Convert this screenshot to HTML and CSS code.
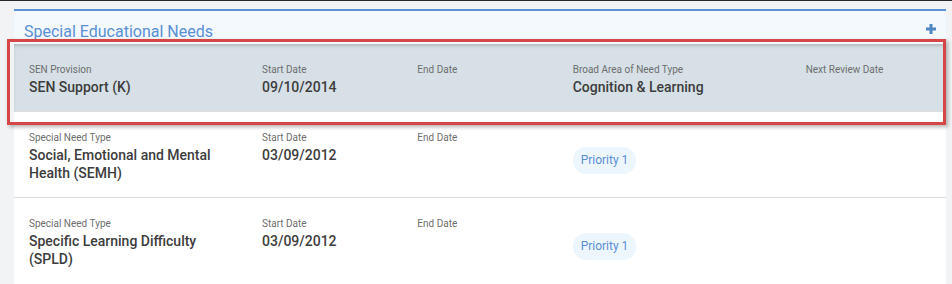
FILE: index.html
```html
<!DOCTYPE html>
<html>
<head>
<title>Special Educational Needs</title>
<link rel="stylesheet" href="styles.css">
</head>
<body>
<div class="page">
  <div class="card">
    <div class="card-header">
      <h2 class="card-title">Special Educational Needs</h2>
      <span class="add-icon">
        <svg width="10" height="10" viewBox="0 0 10 10">
          <path d="M5 0 V10 M0 5 H10" stroke="currentColor" stroke-width="3"/>
        </svg>
      </span>
    </div>

    <div class="sen-row highlight">
      <div class="cell">
        <div class="label">SEN Provision</div>
        <div class="value">SEN Support (K)</div>
      </div>
      <div class="cell">
        <div class="label">Start Date</div>
        <div class="value">09/10/2014</div>
      </div>
      <div class="cell">
        <div class="label">End Date</div>
      </div>
      <div class="cell">
        <div class="label">Broad Area of Need Type</div>
        <div class="value">Cognition &amp; Learning</div>
      </div>
      <div class="cell">
        <div class="label">Next Review Date</div>
      </div>
    </div>

    <div class="sen-row">
      <div class="cell">
        <div class="label">Special Need Type</div>
        <div class="value">Social, Emotional and Mental Health (SEMH)</div>
      </div>
      <div class="cell">
        <div class="label">Start Date</div>
        <div class="value">03/09/2012</div>
      </div>
      <div class="cell">
        <div class="label">End Date</div>
      </div>
      <div class="cell">
        <span class="priority">Priority 1</span>
      </div>
      <div class="cell"></div>
    </div>

    <div class="sen-row last">
      <div class="cell">
        <div class="label">Special Need Type</div>
        <div class="value">Specific Learning Difficulty (SPLD)</div>
      </div>
      <div class="cell">
        <div class="label">Start Date</div>
        <div class="value">03/09/2012</div>
      </div>
      <div class="cell">
        <div class="label">End Date</div>
      </div>
      <div class="cell">
        <span class="priority">Priority 1</span>
      </div>
      <div class="cell"></div>
    </div>

    <div class="annotation"></div>
  </div>
</div>
</body>
</html>
```

FILE: styles.css
```css
body {
  font-family: Roboto, "Liberation Sans", Arial, sans-serif;
  margin: 0;
  padding: 0;
  background-color: #f2f3f5;
  border-top: 1px solid #262626;
  height: 283px;
  overflow: hidden;
}

.page {
  padding: 8px 6px 0 14px;
}

.card {
  position: relative;
  background-color: white;
  border-top: 2px solid #5b92d3;
}

.card-header {
  display: flex;
  justify-content: space-between;
  align-items: flex-start;
  height: 22px;
  padding: 11px 10px 0 10px;
  background-color: #f3f9fd;
}

.card-title {
  margin: 0;
  font-size: 16px;
  font-weight: 400;
  line-height: 20px;
  color: #5a8fd4;
}

.add-icon {
  display: flex;
  margin-top: 2px;
  color: #4f86c6;
}

.sen-row {
  display: grid;
  grid-template-columns: 3fr 2fr 2fr 3fr 2fr;
  padding: 19px 0 15px 0;
  border-bottom: 1px solid #dcdcdc;
}

.sen-row.last {
  border-bottom: none;
  padding-bottom: 30px;
}

.sen-row.highlight {
  background-color: #d6e0e6;
  box-shadow: inset 0 3px 4px -2px rgba(0, 0, 0, 0.25);
}

.cell {
  padding: 0 15px;
}

.label {
  font-size: 10px;
  line-height: 14px;
  color: #6e6e6e;
  margin-bottom: 1px;
}

.value {
  font-size: 14px;
  font-weight: 500;
  line-height: 18px;
  color: #3d3d3d;
}

.priority {
  display: inline-block;
  margin-top: 16px;
  padding: 6px 8px;
  font-size: 12px;
  line-height: 15px;
  color: #5b8fd6;
  background-color: #eef6fd;
  border-radius: 13px;
}

/* red callout drawn over the first row */
.annotation {
  position: absolute;
  left: -7px;
  top: 28px;
  width: 933px;
  height: 80px;
  border: 3px solid #d64647;
  box-shadow: 2px 2px 4px rgba(0, 0, 0, 0.3);
  pointer-events: none;
}
```
